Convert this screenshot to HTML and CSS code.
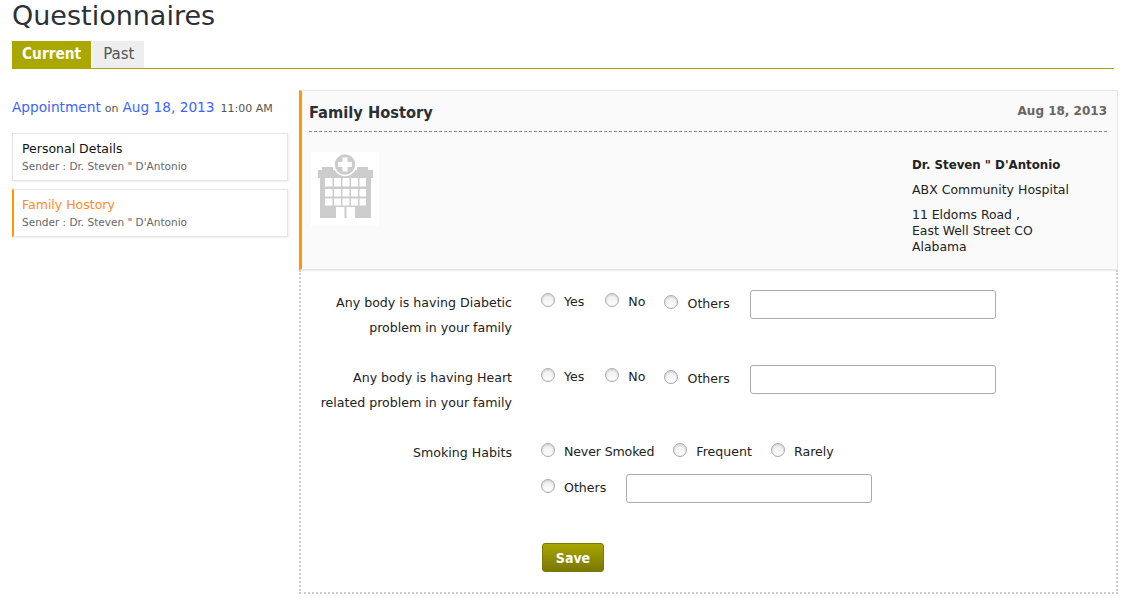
FILE: index.html
```html
<!DOCTYPE html>
<html lang="en">
<head>
    <meta charset="UTF-8">
    <title>Questionnaires</title>
    <link rel="stylesheet" href="styles.css">
</head>
<body>

<h1 class="page-title">Questionnaires</h1>

<ul class="tabs">
    <li class="tab tab-active">Current</li>
    <li class="tab">Past</li>
</ul>

<div class="columns">
    <div class="side">
        <p class="appt"><span class="appt-big">Appointment</span> <span class="appt-small">on</span> <span class="appt-big">Aug 18, 2013</span> <span class="appt-small appt-time">11:00 AM</span></p>

        <div class="card">
            <div class="card-title">Personal Details</div>
            <div class="card-sender">Sender : Dr. Steven " D'Antonio</div>
        </div>
        <div class="card card-active">
            <div class="card-title">Family Hostory</div>
            <div class="card-sender">Sender : Dr. Steven " D'Antonio</div>
        </div>
    </div>

    <div class="main">
        <div class="panel-head">
            <div class="panel-top">
                <h2 class="panel-title">Family Hostory</h2>
                <span class="panel-date">Aug 18, 2013</span>
            </div>
            <div class="panel-info">
                <div class="logo">
                    <svg width="68" height="74" viewBox="0 0 68 74">
                        <path fill="#ccc" d="M7 18h4v-3h11v3h24v-3h11v3h5v8h-2v40H44V55H25v11H9V26H7z"/>
                        <path fill="#ccc" d="M33.500 55h2v11h-2z"/>
                        <g fill="#fff">
                            <rect x="14" y="26" width="7.500" height="8.500"/><rect x="23" y="26" width="7" height="8.500"/><rect x="31.500" y="26" width="7" height="8.500"/><rect x="40" y="26" width="7" height="8.500"/><rect x="48.500" y="26" width="6.500" height="8.500"/>
                            <rect x="14" y="37" width="7.500" height="7.500"/><rect x="23" y="37" width="7" height="7.500"/><rect x="31.500" y="37" width="7" height="7.500"/><rect x="40" y="37" width="7" height="7.500"/><rect x="48.500" y="37" width="6.500" height="7.500"/>
                            <rect x="14" y="46.500" width="7.500" height="7"/><rect x="23" y="46.500" width="7" height="7"/><rect x="31.500" y="46.500" width="7" height="7"/><rect x="40" y="46.500" width="7" height="7"/><rect x="48.500" y="46.500" width="6.500" height="7"/>
                        </g>
                        <circle cx="34" cy="12.500" r="11" fill="#ccc" stroke="#fff" stroke-width="1.500"/>
                        <path fill="#fff" d="M31.500 5.500h5v4.500h4.500v5h-4.500v4.500h-5V15H27v-5h4.500z"/>
                    </svg>
                </div>
                <div class="doctor">
                    <p class="doctor-name">Dr. Steven " D'Antonio</p>
                    <p class="doctor-line">ABX Community Hospital</p>
                    <p class="doctor-addr">11 Eldoms Road ,<br>East Well Street CO<br>Alabama</p>
                </div>
            </div>
        </div>

        <form class="form">
            <div class="row">
                <label class="q">Any body is having Diabetic<br>problem in your family</label>
                <div class="answers">
                    <label class="opt opt-yes"><input type="radio" name="q1"><span>Yes</span></label>
                    <label class="opt"><input type="radio" name="q1"><span>No</span></label>
                    <label class="opt opt-low"><input type="radio" name="q1"><span>Others</span></label>
                    <input class="text" type="text">
                </div>
            </div>
            <div class="row">
                <label class="q">Any body is having Heart<br>related problem in your family</label>
                <div class="answers">
                    <label class="opt opt-yes"><input type="radio" name="q2"><span>Yes</span></label>
                    <label class="opt"><input type="radio" name="q2"><span>No</span></label>
                    <label class="opt opt-low"><input type="radio" name="q2"><span>Others</span></label>
                    <input class="text" type="text">
                </div>
            </div>
            <div class="row row-smoke">
                <label class="q">Smoking Habits</label>
                <div class="answers-stack">
                    <div class="answers">
                        <label class="opt opt-tight"><input type="radio" name="q3"><span>Never Smoked</span></label>
                        <label class="opt"><input type="radio" name="q3"><span>Frequent</span></label>
                        <label class="opt"><input type="radio" name="q3"><span>Rarely</span></label>
                    </div>
                    <div class="answers answers-other">
                        <label class="opt opt-low"><input type="radio" name="q3"><span>Others</span></label>
                        <input class="text" type="text">
                    </div>
                </div>
            </div>
            <button class="save" type="button">Save</button>
        </form>
    </div>
</div>

</body>
</html>
```

FILE: styles.css
```css
* {
    box-sizing: border-box;
}

body {
    margin: 0;
    padding: 0 8px 0 12px;
    font: 12.600px/18px "DejaVu Sans", "Liberation Sans", sans-serif;
    color: #222;
    background: #fff;
}

p, h1, h2, ul {
    margin: 0;
    padding: 0;
}

.page-title {
    height: 41px;
    font-size: 27px;
    line-height: 31px;
    font-weight: normal;
    color: #2b2f36;
}

/* tabs */
.tabs {
    display: flex;
    gap: 1px;
    margin-right: 3px;
    list-style: none;
    border-bottom: 1px solid #aaa800;
}

.tab {
    padding: 0 10px 0 11px;
    height: 27px;
    font-size: 15px;
    line-height: 27px;
    color: #555;
    background: #eee;
}

.tab-active {
    padding: 0 10px;
    font-family: "DejaVu Sans Condensed", "DejaVu Sans", sans-serif;
    font-stretch: condensed;
    font-size: 15.300px;
    font-weight: bold;
    color: #fff;
    background: #aaa800;
}

.columns {
    display: flex;
    align-items: flex-start;
    margin-top: 21px;
}

/* left list */
.side {
    flex: none;
    width: 276px;
    margin-right: 10px;
}

.appt {
    margin-top: 8px;
    margin-bottom: 15px;
    line-height: 18px;
    white-space: nowrap;
}

.appt-big {
    font-size: 13.700px;
    color: #3a66ff;
}

.appt-small {
    font-size: 11px;
    color: #555;
}

.appt-time {
    margin-left: 2px;
}

.card {
    height: 48px;
    margin-bottom: 8px;
    padding: 6px 9px;
    border: 1px solid #e4e4e4;
    box-shadow: 1px 1px 2px #eee;
    background: #fff;
}

.card-active {
    padding-left: 8px;
    border-left: 2px solid #f90;
}

.card-title {
    font-size: 12.500px;
    line-height: 17px;
    color: #111;
}

.card-active .card-title {
    color: #ff8a1f;
}

.card-sender {
    margin-top: 1px;
    font-size: 10.500px;
    line-height: 17px;
    color: #666;
}

/* right panel */
.main {
    flex: none;
    width: 819px;
    margin-left: 1px;
}

.panel-head {
    height: 180px;
    padding: 0 10px 0 7px;
    border: 1px solid #e6e6e6;
    border-left: 3px solid #f90;
    background: #fafafa;
    box-shadow: 0 1px 1px #eee;
}

.panel-top {
    display: flex;
    justify-content: space-between;
    align-items: center;
    height: 41px;
    padding-bottom: 2px;
    /* dashes are longer than a 1px dashed border gives */
    background: repeating-linear-gradient(90deg, #888 0, #888 3px, transparent 3px, transparent 5px) left bottom / 100% 1px no-repeat;
}

.panel-title {
    font-family: "DejaVu Sans Condensed", "DejaVu Sans", sans-serif;
    font-stretch: condensed;
    font-size: 16.300px;
    font-weight: bold;
    padding-top: 4px;
    color: #2b2f36;
}

.panel-date {
    font-size: 12px;
    font-weight: bold;
    color: #666;
}

.panel-info {
    display: flex;
    justify-content: space-between;
    padding-top: 20px;
}

.logo {
    display: flex;
    width: 68px;
    height: 74px;
    margin-left: 2px;
    background: #fff;
}

.doctor {
    width: 195px;
    padding-top: 3px;
}

.doctor-name {
    font-size: 11.800px;
    font-weight: bold;
    line-height: 20px;
}

.doctor-line {
    margin-top: 5px;
    font-size: 12.500px;
    line-height: 20px;
}

.doctor-addr {
    margin-top: 7px;
    font-size: 12.400px;
    line-height: 16px;
}

/* form */
.form {
    height: 324px;
    padding-top: 19px;
    border: 2px dotted #ccc;
    border-top: 0;
}

.row {
    display: flex;
    align-items: flex-start;
    height: 75px;
}

.row-smoke {
    height: 104px;
}

.q {
    flex: none;
    width: 211px;
    margin-right: 29px;
    padding-top: 1px;
    text-align: right;
    line-height: 25px;
}

.answers {
    display: flex;
    align-items: flex-start;
    height: 29px;
    margin-top: 1px;
}

.answers-stack .answers-other {
    margin-top: 5px;
}

.opt {
    display: flex;
    align-items: center;
    margin-right: 19px;
    height: 24px;
    white-space: nowrap;
}

.opt-yes {
    margin-right: 21px;
}

.opt-tight span {
    letter-spacing: -0.150px;
}

.opt-low {
    margin-top: 2px;
    margin-right: 20px;
}

.opt input {
    appearance: none;
    flex: none;
    width: 14px;
    height: 14px;
    margin: -4px 9px 0 0;
    border: 1px solid #aaa;
    border-radius: 50%;
    background: linear-gradient(#eee, #fdfdfd);
    box-shadow: inset 0 1px 2px #ccc;
}

.text {
    width: 246px;
    height: 29px;
    border: 1px solid #aaa;
    border-radius: 3px;
    background: #fff;
}

.save {
    display: block;
    width: 62px;
    height: 29px;
    margin-left: 241px;
    padding: 0;
    border: 1px solid #7a7a00;
    border-radius: 3px;
    font-family: "DejaVu Sans Condensed", "DejaVu Sans", sans-serif;
    font-stretch: condensed;
    font-size: 14px;
    font-weight: bold;
    color: #fff;
    background: linear-gradient(#a8a600, #7a7800);
}
```
